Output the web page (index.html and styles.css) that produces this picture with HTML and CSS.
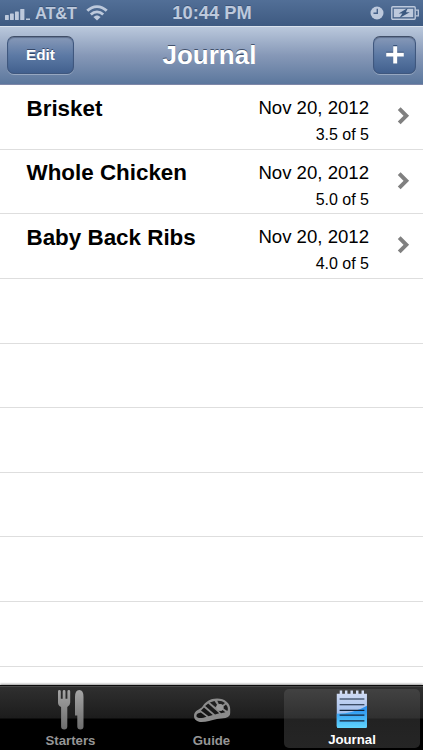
FILE: index.html
```html
<!DOCTYPE html>
<html lang="en">
<head>
  <meta charset="UTF-8" />
  <meta name="viewport" content="width=device-width, initial-scale=1" />
  <title>Journal</title>
  <link rel="stylesheet" href="styles.css">
</head>
<body>
  <div class="phone">
    <div class="status-bar">
      <div class="carrier">
        <svg class="signal" width="26" height="12" viewBox="0 0 26 12" fill="currentColor">
          <rect x="0" y="6" width="3.8" height="5" rx=".6"/>
          <rect x="5" y="4.5" width="3.8" height="6.5" rx=".6"/>
          <rect x="10" y="2.5" width="3.8" height="8.5" rx=".6"/>
          <rect x="15.2" y="0" width="4.2" height="11" rx=".6"/>
          <rect x="21" y="9.5" width="4" height="1.5"/>
        </svg>
        <span>AT&amp;T</span>
        <svg class="wifi" width="22" height="16" viewBox="0 0 22 16" fill="none" stroke="currentColor" stroke-width="2.8">
          <path d="M1.3 5.8C6.8.1 15.2.1 20.7 5.8"/>
          <path d="M4.8 9.6C8.5 6.1 13.5 6.1 17.2 9.6"/>
          <path d="M7.4 12C9.5 9.9 12.5 9.9 14.6 12L11 15.6Z" fill="currentColor" stroke="none"/>
        </svg>
      </div>
      <div class="time">10:44 PM</div>
      <div class="indicators">
        <svg width="14" height="14" viewBox="0 0 14 14">
          <circle cx="7" cy="7" r="6.5" fill="currentColor"/>
          <path d="M7.3 2.8V7.3H3.5" fill="none" stroke="#47628a" stroke-width="1.4"/>
        </svg>
        <svg width="28" height="14" viewBox="0 0 28 14">
          <rect x=".8" y=".8" width="23.4" height="12.4" rx="1" fill="none" stroke="currentColor" stroke-width="1.4"/>
          <path d="M25 4.2h2.3v5.6H25" fill="none" stroke="currentColor" stroke-width="1.3"/>
          <rect x="2.8" y="2.8" width="19.4" height="8.4" fill="currentColor"/>
          <path d="M16.8 2L7.6 7.6H11.4L8.4 12L18.8 6.3H14.9Z" fill="#3b587f"/>
        </svg>
      </div>
    </div>

    <header class="nav-bar">
      <button class="nav-button edit">Edit</button>
      <h1>Journal</h1>
      <button class="nav-button add" aria-label="Add entry">
        <svg width="20" height="20" viewBox="0 0 20 20">
          <path d="M8.2 0h4v6.8h6.6v4h-6.6v7.5h-4v-7.5H1.2v-4h7z" fill="#1f3961" opacity=".7"/>
          <path d="M8.2 1.2h4v6.6h6.6v3.8h-6.6v7h-4v-7H1.2V7.8h7z" fill="#fff"/>
        </svg>
      </button>
    </header>

    <ul class="journal">
      <li class="entry">
        <span class="name">Brisket</span>
        <div class="meta"><span class="date">Nov 20, 2012</span><span class="rating">3.5 of 5</span></div>
        <svg class="chevron" width="14" height="20" viewBox="0 0 14 20"><path d="M2.2 2.7L9.3 9.8L2.2 16.9"/></svg>
      </li>
      <li class="entry">
        <span class="name">Whole Chicken</span>
        <div class="meta"><span class="date">Nov 20, 2012</span><span class="rating">5.0 of 5</span></div>
        <svg class="chevron" width="14" height="20" viewBox="0 0 14 20"><path d="M2.2 2.7L9.3 9.8L2.2 16.9"/></svg>
      </li>
      <li class="entry">
        <span class="name">Baby Back Ribs</span>
        <div class="meta"><span class="date">Nov 20, 2012</span><span class="rating">4.0 of 5</span></div>
        <svg class="chevron" width="14" height="20" viewBox="0 0 14 20"><path d="M2.2 2.7L9.3 9.8L2.2 16.9"/></svg>
      </li>
      <li class="entry"></li>
      <li class="entry"></li>
      <li class="entry"></li>
      <li class="entry"></li>
      <li class="entry"></li>
      <li class="entry"></li>
    </ul>

    <nav class="tab-bar">
      <a class="tab">
        <svg width="28" height="42" viewBox="0 0 28 42">
          <defs>
            <linearGradient id="steel" x1="0" y1="0" x2="0" y2="1">
              <stop offset="0" stop-color="#a5a5a5"/>
              <stop offset="1" stop-color="#6c6c6c"/>
            </linearGradient>
          </defs>
          <path d="M1 2.4Q1 1 2.4 1T3.8 2.4V9.8H5.7V2.4Q5.7 1 7.1 1T8.5 2.4V9.8H10.4V2.4Q10.4 1 11.8 1T13.2 2.4V13.5Q13.2 16.5 10.3 18V37.5Q10.3 40.5 7.2 40.5T4.1 37.5V18Q1 16.5 1 13.5Z" fill="url(#steel)"/>
          <path d="M18 8Q18 1 22.3 1T26.5 8V37.5Q26.5 40.5 23.4 40.5T20.3 37.5V26.5H18Z" fill="url(#steel)"/>
        </svg>
        <span>Starters</span>
      </a>
      <a class="tab">
        <svg width="38" height="42" viewBox="0 0 38 42">
          <path d="M1 27C1 21 7 21 9.5 17.5C12.5 13 17 9.6 24 9.6C32 9.6 37.2 14.5 37.2 20V24C37.2 30 29 29 24 30C18 31 14 33 8.5 33C4 33 1 30.5 1 27Z" fill="#8c8c8c"/>
          <path d="M3.4 27C3.4 24.5 5.5 24 7.8 23.4L13.5 27.8C9.5 29.4 3.8 29.8 3.4 27Z" fill="#141414"/>
          <path d="M8 21.5L11 18.6L19.8 26L15.5 27.3Z" fill="#161616"/>
          <path d="M12.2 17L15.2 14.6L26.2 24.2L22 25.5Z" fill="#1a1a1a"/>
          <path d="M16.8 13.6L21.5 12L24 15.8L22.6 18.2Z" fill="#202020"/>
          <path d="M24.3 11.8Q29 11.5 32 14L29.3 16.2Q27.8 15 26 15.4Z" fill="#222"/>
          <path d="M33 15.5Q36 19 34.3 22L30.5 19.4V17.6Z" fill="#1c1c1c"/>
          <path d="M24.5 20.5Q27 22.8 29.5 21L32.4 23.3L28 24.3Z" fill="#181818"/>
          <circle cx="27" cy="18.4" r="3.4" fill="#999"/>
        </svg>
        <span>Guide</span>
      </a>
      <a class="tab active">
        <svg width="32" height="42" viewBox="0 0 32 42">
          <defs>
            <linearGradient id="paper" x1="0" y1="0" x2="0" y2="1">
              <stop offset="0" stop-color="#d5def4"/>
              <stop offset="1" stop-color="#83ace9"/>
            </linearGradient>
            <linearGradient id="glow" x1="0" y1="0" x2="0" y2="1">
              <stop offset="0" stop-color="#238af0"/>
              <stop offset="1" stop-color="#61d5fc"/>
            </linearGradient>
          </defs>
          <path d="M0 5H3.1V1.5H5.7V5H8.6V1.5H11.2V5H14.4V1.5H17V5H20.2V1.5H22.8V5H26V1.5H28.6V5H31.7V39Q31.7 41 29.7 41H2Q0 41 0 39Z" fill="url(#paper)"/>
          <path d="M0 26Q18 25.5 31.7 17.5V39Q31.7 41 29.7 41H2Q0 41 0 39Z" fill="url(#glow)"/>
          <path d="M3 10.5H29M3 16.5H29M3 22.5H29M3 27.5H29M3 33.5H29" stroke="#132238" stroke-width="1.2"/>
        </svg>
        <span>Journal</span>
      </a>
    </nav>
  </div>
</body>
</html>
```
FILE: styles.css
```css
* {
  box-sizing: border-box;
}
body {
  margin: 0;
  background: #000;
  font-family: "Liberation Sans", Arial, sans-serif;
}
.phone {
  width: 423px;
  height: 750px;
  display: flex;
  flex-direction: column;
  overflow: hidden;
  background: #fff;
}

/* status bar */
.status-bar {
  height: 26px;
  flex: none;
  display: grid;
  grid-template-columns: 1fr auto 1fr;
  align-items: center;
  padding: 0 4px 0 5px;
  background: linear-gradient(#526f97, #3e5a81);
  color: #bdc9dc;
  font-weight: bold;
  text-shadow: 0 -1px 0 rgba(30, 50, 80, 0.4);
}
.carrier {
  display: flex;
  align-items: center;
  gap: 4px;
  font-size: 16.5px;
  letter-spacing: -0.3px;
}
.signal {
  margin-top: 3px;
}
.wifi {
  margin-left: 5px;
}
.time {
  font-size: 18.3px;
}
.indicators {
  display: flex;
  justify-content: flex-end;
  align-items: center;
  gap: 7px;
}

/* navigation bar */
.nav-bar {
  height: 59px;
  flex: none;
  display: grid;
  grid-template-columns: 67px 1fr 43px;
  align-items: center;
  padding: 0 7px 1px;
  background: linear-gradient(#bac8dc, #8698b7 50%, #5b779d);
  border-top: 1px solid #dae2ed;
  border-bottom: 1px solid #7e87a8;
}
.nav-bar h1 {
  margin: 0 28px 0 0;
  text-align: center;
  font-size: 26px;
  line-height: 30px;
  color: #fff;
  text-shadow: 0 -1px 0 rgba(40, 55, 80, 0.75);
}
.nav-button {
  height: 38px;
  padding: 0;
  display: flex;
  align-items: center;
  justify-content: center;
  border: 1px solid #3f577e;
  border-top-color: #404e67;
  border-radius: 7px;
  background: linear-gradient(#8799b8, #5d7aa5 50%, #42608e);
  box-shadow: inset 0 1px 1px rgba(40, 55, 85, 0.4), 0 1px 0 rgba(255, 255, 255, 0.3);
  color: #fff;
  font: bold 15.3px "Liberation Sans", Arial, sans-serif;
  text-shadow: 0 -1px 0 rgba(30, 45, 75, 0.7);
}

/* journal list */
.journal {
  flex: 1;
  margin: 0;
  padding: 0;
  list-style: none;
  overflow: hidden;
}
.entry {
  height: 64.65px;
  display: flex;
  padding-left: 26.5px;
  border-bottom: 1px solid #dedede;
  color: #000;
}
.name {
  flex: 1;
  padding-top: 10.5px;
  font-size: 22.4px;
  line-height: 26px;
  font-weight: bold;
}
.meta {
  display: flex;
  flex-direction: column;
  align-items: flex-end;
  padding-top: 11px;
}
.date {
  font-size: 18.6px;
  line-height: 24px;
}
.rating {
  margin-top: 5px;
  font-size: 16px;
  line-height: 20px;
}
.chevron {
  margin: 21px 12px 0 28px;
  fill: none;
  stroke: #808080;
  stroke-width: 4;
}

/* tab bar */
.tab-bar {
  height: 65px;
  flex: none;
  display: flex;
  background: linear-gradient(#303030, #1c1c1c 32px, #000 33px);
  border-top: 1px solid #0a0a0a;
  box-shadow: inset 0 1px 0 #484848, 0 -1px 2px rgba(0, 0, 0, 0.4);
}
.tab {
  width: 141px;
  display: flex;
  flex-direction: column;
  align-items: center;
  padding-top: 3px;
  color: #969696;
  font-size: 13.2px;
  line-height: 16px;
  font-weight: bold;
}
.tab span {
  margin-top: 2px;
}
.tab.active {
  width: 136px;
  height: 59px;
  margin: 3px 0 0 2px;
  padding-top: 0;
  border-radius: 5px;
  background: linear-gradient(#424242, #303030 29px, #222 30px, #252525);
  color: #fff;
}
.tab.active span {
  margin-top: 3px;
}
```
